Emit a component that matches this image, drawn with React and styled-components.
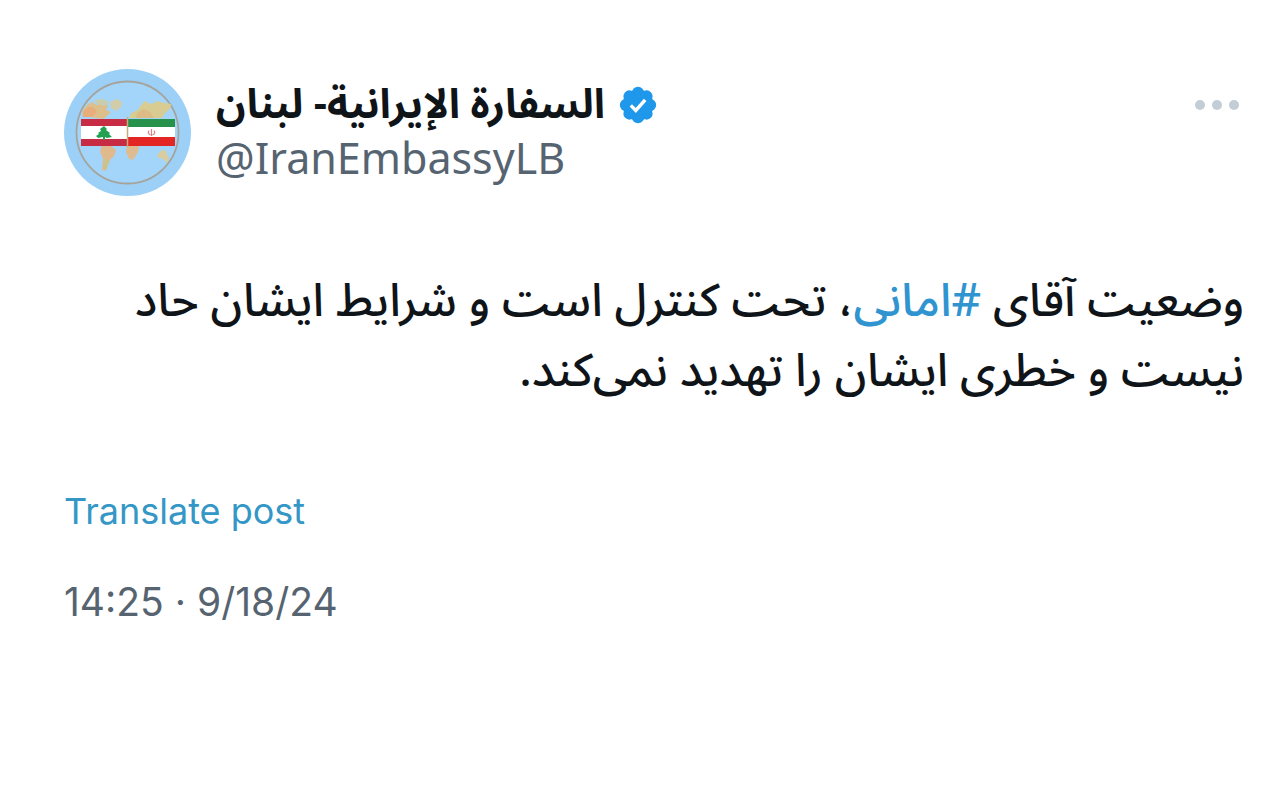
import styled, { createGlobalStyle } from "styled-components";

export default function App(){
    return(
        <>
            <GlobalStyle />
            <Post>
                <Header>
                    <AvatarLink href="#profile" aria-label="IranEmbassyLB">
                        <Avatar />
                    </AvatarLink>
                    <Author>
                        <NameRow>
                            <Name dir="rtl" lang="ar">السفارة الإيرانية- لبنان</Name>
                            <VerifiedBadge />
                        </NameRow>
                        <Handle>@IranEmbassyLB</Handle>
                    </Author>
                    <MoreButton type="button" aria-label="More">
                        <svg viewBox="0 0 46 12" width="46" height="12" fill="#c3cdd6">
                            <circle cx="6" cy="6" r="5" />
                            <circle cx="23" cy="6" r="5" />
                            <circle cx="40" cy="6" r="5" />
                        </svg>
                    </MoreButton>
                </Header>
                <Message dir="rtl" lang="fa">
                    وضعیت آقای <Hashtag href="#hashtag">#امانی</Hashtag>، تحت کنترل است و شرایط ایشان حاد نیست و خطری ایشان را تهدید نمی‌کند.
                </Message>
                <TranslateButton type="button">Translate post</TranslateButton>
                <Timestamp>14:25 · 9/18/24</Timestamp>
            </Post>
        </>
    )
}

function VerifiedBadge(){
    const lobes = [0, 45, 90, 135, 180, 225, 270, 315]
    return(
        <svg viewBox="0 0 38 38" width="38" height="38" aria-hidden="true">
            <g fill="#1f97ea">
                <circle cx="19" cy="19" r="15.5" />
                {lobes.map((angle)=>(
                    <circle key={angle} cx="19" cy="6.8" r="6" transform={`rotate(${angle} 19 19)`} />
                ))}
            </g>
            <path d="M11.8 19.4l5 5 9.4-10.6" fill="none" stroke="#fff" strokeWidth="3.4" />
        </svg>
    )
}

function Avatar(){
    return(
        <svg viewBox="0 0 127 127" width="127" height="127" aria-hidden="true">
            <circle cx="63.5" cy="63.5" r="63.5" fill="#9dd0f6" />
            <circle cx="63.5" cy="63.5" r="51" fill="#a3d5fb" stroke="#a5a49c" strokeWidth="1.8" />
            <path d="M18 47l1-6 5-6 4-2 5 3 6-2 5 2-2 5 5 2-4 4-4 3z" fill="#dcbf8a" />
            <path d="M19 43l5-5 6 1 3 4-5 5h-9z" fill="#e8ad7a" />
            <path d="M30 31l9-1 6 3-4 4-8-2z" fill="#c9cdae" />
            <path d="M46 33l7-3 5 3-1 5-5 4-5-3z" fill="#d3cca9" />
            <path d="M65 49l2-5 7-3 2-4 5-5 6 3 7-3 6 2 7 1-1 5-5 4-3 5z" fill="#d8cc93" />
            <path d="M73 44l7-4 6 3 4 6H72z" fill="#dcbb84" />
            <path d="M38 76h8l6 5-2 6-4 4-3 8-2 3-3-1 1-12-3-6z" fill="#e0b98d" />
            <path d="M41 89l4 3-3 9-3-2z" fill="#c6c58c" />
            <path d="M63 77h12l-1 6-5 8-4-1-3-7z" fill="#dfbb90" />
            <path d="M94 85l4-4 4 1 3 8-2 4-4-4-6-2z" fill="#d9cc9e" />
            <rect x="17" y="50" width="46" height="27" fill="#fff" />
            <rect x="17" y="50" width="46" height="7" fill="#c82c45" />
            <rect x="17" y="70" width="46" height="7" fill="#c82c45" />
            <path d="M40 57l3 3-1 1 4 3-1 1 3 3-5 1-2-1v3h-2v-3l-5 1-2-2 3-2-1-1 3-2-1-2z" fill="#23a052" />
            <rect x="64" y="50" width="47" height="27" fill="#fff" />
            <rect x="64" y="50" width="47" height="8" fill="#26914b" />
            <rect x="64" y="68" width="47" height="9" fill="#e32623" />
            <path d="M87.5 60v7M85 61.5q-2 3 1.5 4.5M90 61.5q2 3-1.5 4.5" fill="none" stroke="#d98286" strokeWidth="1.2" />
            <path d="M63.5 48v30" stroke="#c7ae79" strokeWidth="1.5" />
        </svg>
    )
}

const GlobalStyle = createGlobalStyle`
    *{
        box-sizing: border-box;
    }
    body{
        margin: 0;
        background-color: #fff;
        font-family: 'Inter', 'DejaVu Sans', sans-serif;
    }
    svg{
        display: block;
        flex-shrink: 0;
    }
    button{
        padding: 0;
        border: none;
        background: none;
        font-family: inherit;
        cursor: pointer;
    }
    a{
        text-decoration: none;
    }
`
const Post = styled.article`
    display: flex;
    flex-direction: column;
    align-items: flex-start;
    padding: 69px 36px 64px 64px;
`
const Header = styled.header`
    width: 100%;
    display: flex;
    align-items: flex-start;
    gap: 25px;
`
const AvatarLink = styled.a`
    border-radius: 50%;
`
const Author = styled.div`
    flex: 1;
    padding-top: 8px;
`
const NameRow = styled.div`
    display: flex;
    align-items: center;
    gap: 14px;
`
const Name = styled.h1`
    margin: 0;
    font-family: 'Noto Sans Arabic', 'DejaVu Sans', sans-serif;
    font-weight: 700;
    font-size: 41px;
    line-height: 56px;
    white-space: nowrap;
    color: #0f1419;
`
const Handle = styled.p`
    margin: 0;
    font-family: 'Noto Sans', sans-serif;
    font-size: 43px;
    line-height: 50px;
    color: #566370;
`
const MoreButton = styled.button`
    padding: 30px 4px;
`
const Message = styled.p`
    width: 100%;
    margin: 71px 0 0;
    font-family: 'Noto Sans Arabic', 'DejaVu Sans', sans-serif;
    font-weight: 500;
    font-size: 46px;
    line-height: 70px;
    color: #0f1419;
`
const Hashtag = styled.a`
    color: #2f94cf;
`
const TranslateButton = styled.button`
    margin-top: 80px;
    font-size: 36px;
    line-height: 48px;
    color: #3497c6;
`
const Timestamp = styled.time`
    margin-top: 41px;
    font-size: 39px;
    line-height: 52px;
    color: #566370;
`
